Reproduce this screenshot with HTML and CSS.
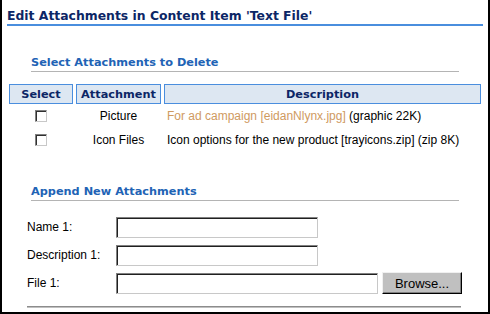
FILE: index.html
```html
<!DOCTYPE html>
<html>
<head>
<meta charset="utf-8">
<link rel="stylesheet" href="styles.css">
</head>
<body>
<div class="frame">
  <h1 class="title">Edit Attachments in Content Item 'Text File'</h1>

  <h2 class="section first">Select Attachments to Delete</h2>
  <table class="att">
    <thead>
      <tr>
        <th class="c-sel">Select</th>
        <th class="c-att">Attachment</th>
        <th class="c-desc">Description</th>
      </tr>
    </thead>
    <tbody>
      <tr>
        <td class="center"><span class="check"></span></td>
        <td class="center">Picture</td>
        <td><span class="link">For ad campaign [eidanNlynx.jpg]</span> (graphic 22K)</td>
      </tr>
      <tr>
        <td class="center"><span class="check"></span></td>
        <td class="center">Icon Files</td>
        <td>Icon options for the new product [trayicons.zip] (zip 8K)</td>
      </tr>
    </tbody>
  </table>

  <h2 class="section second">Append New Attachments</h2>
  <div class="form">
    <div class="row">
      <span class="label">Name 1:</span>
      <span class="input"></span>
    </div>
    <div class="row">
      <span class="label">Description 1:</span>
      <span class="input"></span>
    </div>
    <div class="row">
      <span class="label">File 1:</span>
      <span class="input wide"></span>
      <span class="button">Browse...</span>
    </div>
  </div>
  <div class="rule"></div>
</div>
</body>
</html>
```

FILE: styles.css
```css
html, body {
  margin: 0;
  padding: 0;
  background: #fff;
}
.frame {
  box-sizing: border-box;
  width: 490px;
  height: 314px;
  border-left: 2px solid #000;
  border-right: 2px solid #000;
  border-bottom: 2px solid #000;
  padding: 8px 5px 0 5px;
  font-family: "Liberation Sans", Arial, sans-serif;
  font-size: 12px;
  color: #000;
  overflow: hidden;
}
.title {
  margin: 0;
  font-family: "DejaVu Sans", Verdana, sans-serif;
  font-weight: bold;
  font-size: 12.4px;
  line-height: 16px;
  color: #0c2666;
  border-bottom: 2px solid #4a8ede;
  white-space: nowrap;
}
.section {
  margin: 0 24px;
  font-family: "DejaVu Sans", Verdana, sans-serif;
  font-weight: bold;
  font-size: 11.3px;
  line-height: 14px;
  padding-bottom: 1px;
  color: #2163b5;
  border-bottom: 1px solid #b4b4b4;
}
.section.first {
  margin-top: 30px;
}
.section.second {
  margin-top: 33px;
}
.att {
  margin: 12px -1px 0 -1px;
  border-collapse: separate;
  border-spacing: 3px 0;
  width: 478px;
}
.att th {
  box-sizing: border-box;
  height: 20px;
  padding: 0;
  background: #dde7f2;
  border: 1px solid #4a8ede;
  font-family: "DejaVu Sans", Verdana, sans-serif;
  font-weight: bold;
  font-size: 11.3px;
  color: #0c2666;
  text-align: center;
}
.c-sel { width: 64px; }
.c-att { width: 85px; }
.att td {
  height: 24px;
  padding: 0 3px;
  vertical-align: middle;
  white-space: nowrap;
}
.att td.center {
  text-align: center;
}
.link {
  color: #cf9a5f;
}
.check {
  display: inline-block;
  box-sizing: border-box;
  width: 12px;
  height: 12px;
  vertical-align: -2px;
  border-top: 1px solid #808080;
  border-left: 1px solid #808080;
  border-right: 1px solid #c8c8c8;
  border-bottom: 1px solid #c8c8c8;
  box-shadow: inset 1px 1px 0 #303030;
  background: #fff;
}
.form {
  margin: 15px 0 0 20px;
  display: flex;
  flex-direction: column;
  gap: 6px;
}
.row {
  display: flex;
  align-items: center;
  height: 22px;
}
.label {
  width: 89px;
}
.input {
  box-sizing: border-box;
  width: 202px;
  height: 21px;
  border-top: 1px solid #808080;
  border-left: 1px solid #808080;
  border-right: 1px solid #c8c8c8;
  border-bottom: 1px solid #c8c8c8;
  box-shadow: inset 1px 1px 0 #202020;
  background: #fff;
}
.input.wide {
  width: 262px;
}
.button {
  box-sizing: border-box;
  margin-left: 4px;
  width: 80px;
  height: 22px;
  background: #c0c0c0;
  border-top: 1px solid #f0f0f0;
  border-left: 1px solid #f0f0f0;
  border-right: 1px solid #000;
  border-bottom: 1px solid #000;
  box-shadow: inset -1px -1px 0 #808080;
  display: flex;
  align-items: center;
  justify-content: center;
  font-size: 13px;
}
.rule {
  margin: 12px 22px 0 20px;
  border-top: 1px solid #8c8c8c;
  border-bottom: 1px solid #c0c0c0;
}
```
